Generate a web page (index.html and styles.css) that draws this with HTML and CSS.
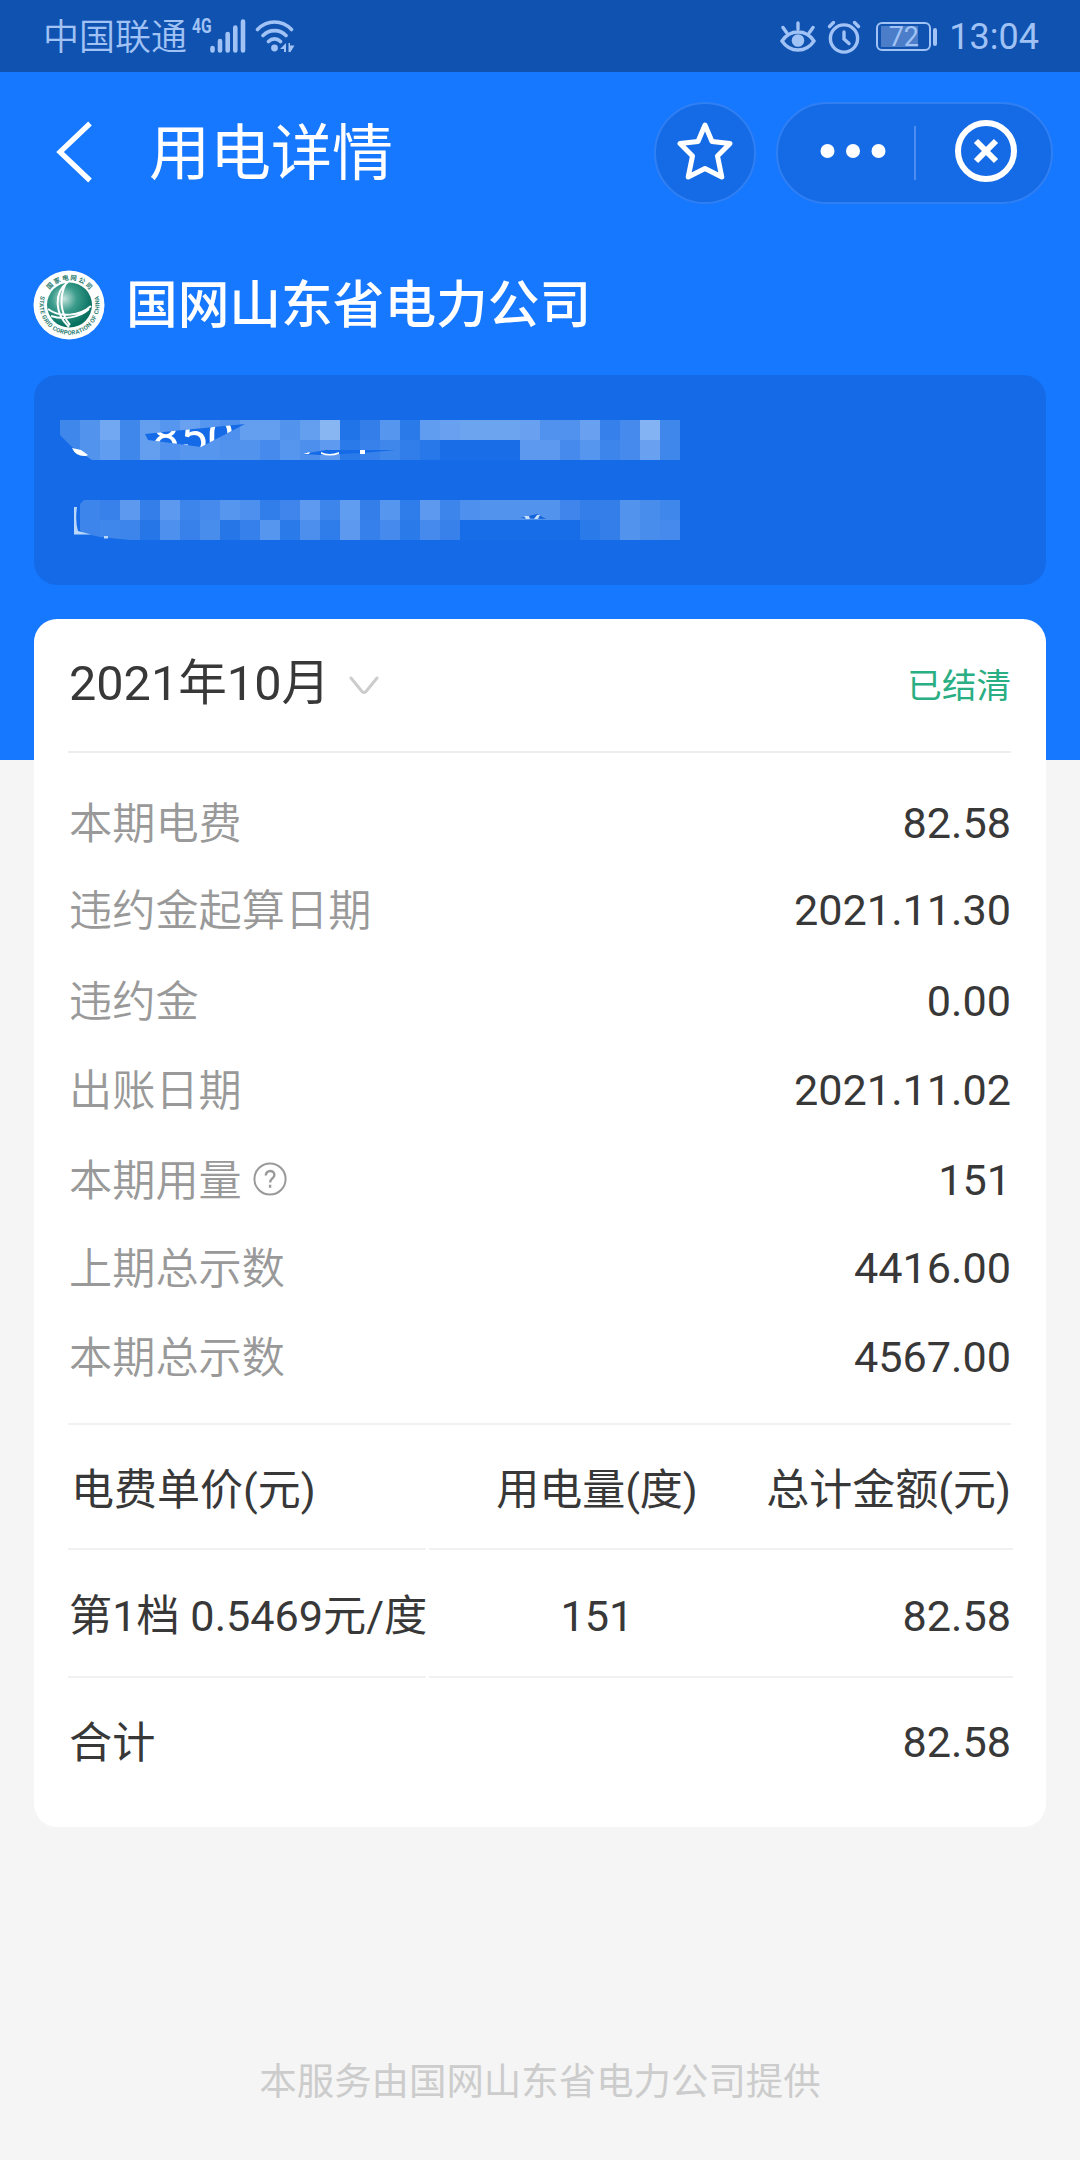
FILE: index.html
```html
<!DOCTYPE html>
<html lang="zh-CN">
<head>
<meta charset="utf-8">
<title>用电详情</title>
<link rel="stylesheet" href="styles.css">
</head>
<body>
<div class="page">
  <header class="status">
    <div class="status-left">
      <span class="carrier">中国联通</span>
      <span class="net">4G</span>
      <svg class="signal" width="36" height="34" viewBox="0 0 36 34" stroke="currentColor" stroke-width="4.6" stroke-linecap="round">
        <path d="M2.5 29v2.500M10 22v9.500M17.700 15v16.500M25.300 8.500v23M33 2.500v29"/>
      </svg>
      <svg class="wifi" width="40" height="34" viewBox="0 0 40 34" fill="none" stroke="currentColor" stroke-width="3.6" stroke-linecap="round">
        <path d="M2.500 10.500C12 .5 27 .5 36.500 10.500M8 16.500c6.500-6.500 16.500-6.500 23 0M13.500 22.500c3.500-3.500 8.500-3.500 12 0"/>
        <circle cx="19.500" cy="29" r="3.400" fill="currentColor" stroke="none"/>
        <path d="M31 24v9h-2v-3h-4zM33.500 24h1.500v2.500l4.500 0-4 6.500h-2z" fill="currentColor" stroke="none"/>
      </svg>
    </div>
    <div class="status-right">
      <svg width="36" height="34" viewBox="0 0 36 34" fill="none" stroke="currentColor" stroke-width="3.400" stroke-linecap="round">
        <path d="M2 21C10 9 26 9 34 21C26 33 10 33 2 21zM18 9V3M6.500 12.500L3 7.500M29.500 12.500L33 7.500"/>
        <circle cx="18" cy="20.500" r="6.300" fill="currentColor" stroke="none"/>
      </svg>
      <svg width="34" height="34" viewBox="0 0 34 34" fill="none" stroke="currentColor" stroke-width="3.400" stroke-linecap="round">
        <circle cx="17" cy="18.500" r="13.600"/>
        <path d="M17 12v7l5 4.500M2.500 6.500l4-4M31.500 6.500l-4-4"/>
      </svg>
      <div class="battery"><span>72</span></div>
      <span class="clock">13:04</span>
    </div>
  </header>

  <nav class="nav">
    <svg class="back" width="36" height="62" viewBox="0 0 36 62" fill="none" stroke="#fff" stroke-width="5.200">
      <path d="M34 2.500L4 31L34 59.500"/>
    </svg>
    <h1>用电详情</h1>
    <div class="star">
      <svg width="56" height="60" viewBox="0 0 56 60" fill="none" stroke="#fff" stroke-width="5" stroke-linejoin="round">
        <path d="M28 4L35 20.500L53 22.500L40.500 35L44.800 56L28 47.500L11.200 56L15.500 35L3 22.500L21 20.500Z"/>
      </svg>
    </div>
    <div class="capsule">
      <svg width="66" height="16" viewBox="0 0 66 16" fill="#fff"><circle cx="7.500" cy="8" r="7"/><circle cx="33" cy="8" r="7"/><circle cx="58.500" cy="8" r="7"/></svg>
      <i class="sep"></i>
      <svg width="64" height="64" viewBox="0 0 64 64" fill="none" stroke="#fff" stroke-width="6">
        <circle cx="32" cy="32" r="28"/><path d="M22 22l20 20M42 22l-20 20" stroke-width="6"/>
      </svg>
    </div>
  </nav>

  <section class="company">
    <svg class="logo" width="72" height="70" viewBox="0 0 72 70">
      <defs>
        <radialGradient id="globe" cx=".38" cy=".36" r=".62"><stop offset="0" stop-color="#c4e3dc"/><stop offset=".45" stop-color="#3b9c8b"/><stop offset="1" stop-color="#08705f"/></radialGradient>
        <path id="arc-top" d="M11.500 35a25 25 0 0 1 50 0"/>
        <path id="arc-bottom" d="M8.500 24a30 30 0 1 0 56 0"/>
      </defs>
      <ellipse cx="36" cy="35" rx="35.500" ry="34.500" fill="#fff"/>
      <text class="seal" font-size="6.500"><textPath href="#arc-top" startOffset="50%" text-anchor="middle" textLength="46">国家电网公司</textPath></text>
      <text class="seal" font-size="6"><textPath href="#arc-bottom" startOffset="50%" text-anchor="middle" textLength="112">STATE GRID CORPORATION OF CHINA</textPath></text>
      <ellipse cx="36.500" cy="35" rx="22.500" ry="22.500" fill="url(#globe)"/>
      <g fill="none" stroke="#fff" stroke-width="2"><path d="M15 39c12 9 32 7 43-3M18 46c12 4 28 2 38-7M35 12c-15 11-13 32 1 45M33 13c-7 14-6 30 4 42"/></g>
    </svg>
    <h2>国网山东省电力公司</h2>
  </section>

  <section class="account">
    <svg class="mosaic" width="640" height="140" viewBox="50 410 640 140">
      <defs>
        <clipPath id="gap-a"><path d="M145 434L173 431L245 424L222 436L201 447L186 445L148 440Z"/></clipPath>
      </defs>
      <g id="cells"></g>
      <path d="M60 435L72 447L92 460H60Z" fill="#156be7"/>
      <path d="M76 500H84L76 508V524L82 533L100 537L130 540H76Z" fill="#156be7"/>
      <path d="M145 434L173 431L245 424L222 436L201 447L186 445L148 440Z" fill="#156be7"/>
      <path d="M302 454L326 450L396 450L363 453L320 455Z" fill="#156be7"/>
      <g clip-path="url(#gap-a)"><text x="152 180 207" y="454" class="masked">850</text></g>
      <path d="M72 448q4 9 14 8l2-1-7-5z" fill="#fff"/>
      <path d="M321 452q8 4 18 0v2q-9 3-18 0zM360 450h5v4h-5zM303 454l7-2-1 2z" fill="#fff"/>
      <path d="M74 507h3q-2 14 1 24l13 3.500H74z" fill="#b9d7fb"/>
      <path d="M104 536h4v2.500h-4z" fill="#b9d7fb"/>
      <path d="M520 518l17-4 9 5z" fill="#1463d8"/>
      <path d="M524 516l5 0 1 3h-4zM537 515l3 0-2 4h-4z" fill="#c6dffb"/>
    </svg>
  </section>

  <main class="card">
    <div class="card-head">
      <div class="month"><span>2021年10月</span>
        <svg width="30" height="20" viewBox="0 0 30 20" fill="none" stroke="#ccc" stroke-width="3" stroke-linecap="round"><path d="M2 2L13 15.500q2 2 4 0L28 2"/></svg>
      </div>
      <span class="paid">已结清</span>
    </div>
    <dl class="details">
      <div><dt>本期电费</dt><dd>82.58</dd></div>
      <div><dt>违约金起算日期</dt><dd>2021.11.30</dd></div>
      <div><dt>违约金</dt><dd>0.00</dd></div>
      <div><dt>出账日期</dt><dd>2021.11.02</dd></div>
      <div><dt>本期用量<svg class="help" width="34" height="34" viewBox="0 0 34 34" fill="none" stroke="#999" stroke-width="2"><circle cx="17" cy="17" r="15.600"/><path d="M12.800 13.500c0-6 8.600-6 8.600-.5 0 3.500-4.300 3.500-4.300 7.500M17.100 22.800v3" stroke-width="2.400"/></svg></dt><dd>151</dd></div>
      <div><dt>上期总示数</dt><dd>4416.00</dd></div>
      <div><dt>本期总示数</dt><dd>4567.00</dd></div>
    </dl>
    <div class="price">
      <div class="tr head"><span class="indent">电费单价(元)</span><span>用电量(度)</span><span>总计金额(元)</span></div>
      <div class="tr tier"><span>第1档 0.5469元/度</span><span>151</span><span>82.58</span></div>
      <div class="tr total"><span>合计</span><span></span><span>82.58</span></div>
    </div>
  </main>

  <footer>本服务由国网山东省电力公司提供</footer>
</div>
<script src="mosaic.js"></script>
</body>
</html>
```

FILE: mosaic.js
```js
// Opacity (percent) of each 20px redaction block, left to right.
var rows = [
  [420, [20,28,42,20,36,30,38,30,26,36,36,28,36,52,6,14,30,10,34,38,40,40,40,38,27,27,38,15,22,50,20]],
  [440, [20,28,34,20,36,27,30,30,28,28,22,30,25,33,10,16,20,13,9,2,2,2,2,32,32,22,30,18,22,38,20]],
  [500, [0,18,16,32,14,32,18,22,30,26,13,19,33,18,34,14,30,12,32,18,26,28,28,28,28,19,14,14,28,23,20]],
  [520, [0,18,20,18,8,26,16,24,8,15,30,10,25,12,32,15,22,10,22,16,1,1,1,1,1,1,10,14,28,24,22]]
];
var cells = document.getElementById('cells');
rows.forEach(function (row) {
  row[1].forEach(function (alpha, i) {
    var r = document.createElementNS('http://www.w3.org/2000/svg', 'rect');
    r.setAttribute('x', 60 + i * 20);
    r.setAttribute('y', row[0]);
    r.setAttribute('width', 20);
    r.setAttribute('height', 20);
    r.setAttribute('fill', '#f2fbff');
    r.setAttribute('fill-opacity', alpha / 100);
    cells.appendChild(r);
  });
});
```

FILE: styles.css
```css
* { box-sizing: border-box; margin: 0; padding: 0; }
body {
  background: #f5f5f5;
  font-family: Roboto, "Noto Sans CJK SC", sans-serif;
  font-size: 43.2px;
  color: #383838;
}
svg { display: block; flex: none; }
.page {
  width: 1080px;
  height: 2160px;
  display: flex;
  flex-direction: column;
  background: linear-gradient(#1677ff 760.500px, #f5f5f5 760.500px);
  overflow: hidden;
}

.status {
  height: 72px;
  flex: none;
  display: flex;
  justify-content: space-between;
  padding: 0 41px 0 42px;
  background: #1052b0;
  color: #a0c2f4;
}
.status-left, .status-right { display: flex; align-items: center; }
.carrier { font-size: 36px; line-height: 68px; font-weight: 350; padding-top: 4px; margin-left: 1px; }
.net { font-size: 20px; font-weight: 700; width: 20px; margin: -20px 0 0 5px; transform: scaleX(.78); transform-origin: 0 50%; }
.signal { margin-left: -2px; }
.wifi { margin-left: 9px; }
.status-right { padding-top: 2px; }
.status-right > svg + svg { margin-left: 11px; }
.battery {
  position: relative;
  width: 55px;
  height: 29px;
  margin: -1px 0 0 15px;
  border: 2px solid currentColor;
  border-radius: 6px;
  background: linear-gradient(#4c7dc8, #4c7dc8) 3px 2px / 37px 21px no-repeat;
  font-size: 27px;
  line-height: 26px;
  text-align: center;
}
.battery::after {
  content: "";
  position: absolute;
  right: -8px;
  top: 4px;
  width: 4px;
  height: 18px;
  border-radius: 2px;
  background: currentColor;
}
.clock { font-size: 36px; margin-left: 18px; }

.nav { height: 160px; flex: none; display: flex; align-items: center; padding: 0 27px 0 56px; }
.nav h1 { font-size: 61px; font-weight: 400; line-height: 80px; color: #fff; margin: 3px auto 0 57px; }
.star, .capsule {
  height: 102px;
  margin-top: 1px;
  background: #156be6;
  border: 2px solid #307ff3;
  border-radius: 51px;
  display: flex;
  align-items: center;
}
.star { width: 102px; justify-content: center; margin-right: 20px; }
.star svg { margin-top: -3px; }
.capsule { width: 277px; padding-left: 42px; }
.capsule svg { margin-top: -4px; }
.sep { width: 2px; height: 54px; background: #4b8df0; margin: 0 38px 0 28px; }

.company { height: 143px; flex: none; display: flex; align-items: center; padding-left: 33px; gap: 21px; }
.logo { margin-top: 2px; }
.seal { fill: #2f8073; font-weight: 700; }
.company h2 { font-size: 51.700px; line-height: 76px; font-weight: 500; color: #fff; margin-top: 5px; }

.account {
  height: 210px;
  flex: none;
  margin: 0 34px 33.500px;
  padding: 35px 0 0 16px;
  border-radius: 23px;
  background: #156be7;
}
.masked { font-size: 49px; fill: #fff; }

.card {
  height: 1208.500px;
  flex: none;
  margin: 0 34px;
  padding: 0 34px;
  border-radius: 23px;
  background: #fff;
}
.card-head {
  height: 134px;
  display: flex;
  justify-content: space-between;
  align-items: center;
  padding: 0 0 4px 1px;
  margin-right: 1px;
  border-bottom: 2px solid #eee;
}
.month { display: flex; align-items: center; gap: 19px; font-size: 48.600px; line-height: 72px; }
.month span { padding-top: 3px; }
.month svg { margin-top: 7px; }
.paid { font-size: 34.560px; color: #2aae83; }

.details { height: 672.500px; border-bottom: 2px solid #f1f1f1; padding: 40px 0 0 1px; margin-right: 1px; }
.details > div { height: 62px; display: flex; justify-content: space-between; line-height: 62px; margin-bottom: 26.500px; }
.details > div:nth-child(1) { margin-bottom: 25.500px; }
.details > div:nth-child(2) { margin-bottom: 29px; }
.details > div:nth-child(4) { margin-bottom: 28px; }
.details dt { display: flex; align-items: center; gap: 11px; color: #999; padding-top: 2px; font-weight: 350; }
.help { margin-top: -5px; }

.price { display: flex; flex-direction: column; margin-right: -1px; }
.tr {
  height: 128px;
  display: grid;
  grid-template-columns: 358px 334px minmax(0, 1fr);
  column-gap: 3px;
  line-height: 62px;
  white-space: nowrap;
}
.tr span { display: flex; align-items: center; padding: 6px 2px 0 1px; border-bottom: 2px solid #f1f1f1; }
.tr span:nth-child(2) { justify-content: center; margin-right: -3px; }
.tr span:nth-child(3) { justify-content: flex-end; }
.head { height: 125px; font-size: 43px; }
.tr.head .indent { padding-left: 3px; }
.tr.tier span { padding-top: 8px; }
.tr.total span { border-bottom: 0; padding-top: 1px; }
.tr.total span:first-child { padding-top: 4px; }

footer { margin-top: 227px; text-align: center; font-size: 37.440px; line-height: 56px; color: #ccc; }
```
